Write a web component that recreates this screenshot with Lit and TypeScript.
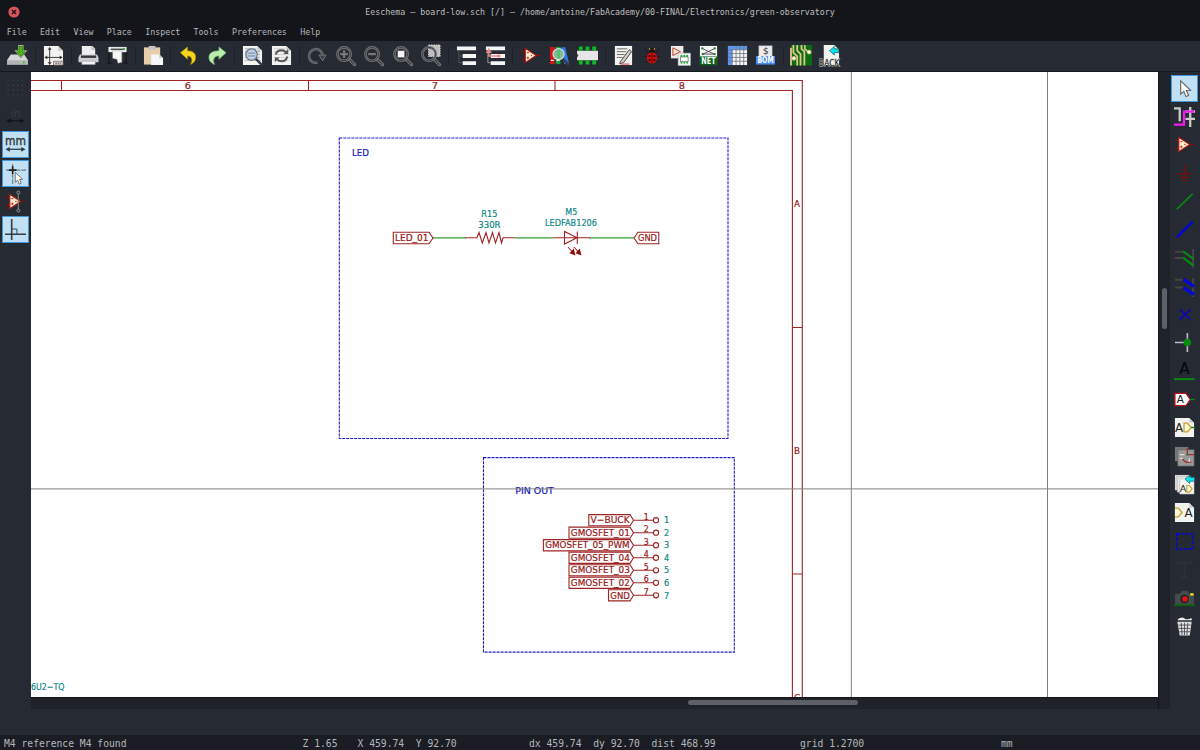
import { LitElement, html, svg, css } from "lit";
import { customElement } from "lit/decorators.js";

const sheet = svg`<path d="M1 1H16L21 6V21H1Z" fill="#f2f2f0"/><path d="M16 1V6H21Z" fill="#c9c9c9"/>`;
const opamp = svg`<path d="M1.500 7H6M1.500 15H6M17 11H21.500" stroke="#8c0a0a" stroke-width="1.300"/><path d="M5.500 3.500V18.500L17 11Z" fill="#fbeccb" stroke="#a51212" stroke-width="1.200"/><path d="M7 8H9.500M7 13.500H9.500M8.200 12.200V14.800" stroke="#b01818" stroke-width=".9"/><circle cx="12" cy="11" r=".8" fill="#b04030"/>`;
const lens = svg`<path d="M14.500 14.500L20.500 20.500" stroke="#757575" stroke-width="3.400" stroke-linecap="round"/><path d="M14.500 14.500L20.500 20.500" stroke="#33373c" stroke-width="1.200"/><circle cx="9.500" cy="9.500" r="7" fill="none" stroke="#777" stroke-width="2.700"/><circle cx="9.500" cy="9.500" r="7" fill="none" stroke="#3d4045" stroke-width="1"/>`;
const cursor = svg`<path d="M7 3V17L10.300 14L12.500 19.500L15.300 18.300L13 13L17.300 12.800Z" fill="#fff" stroke="#666" stroke-width="1.200"/>`;
const chip = svg`<path d="M0 6H22V16H0Z" fill="#e6e6e6"/><path d="M2 1.500H6V6H2ZM9 1.500H13V6H9ZM16 1.500H20V6H16ZM2 16H6V20.500H2ZM9 16H13V20.500H9ZM16 16H20V20.500H16Z" fill="#10b828"/><path d="M0 9Q3 11 0 13Z" fill="#555"/>`;

const icons: Record<string, unknown> = {
  save: svg`<path d="M4 10H18L22 16V20.500H0V16Z" fill="#d6d6d6"/><path d="M0 16H22V20.500H0Z" fill="#b4b4b4"/><circle cx="17.500" cy="18.300" r="1" fill="#18c818"/><path d="M11.500 0H17.500V5.500H21.500L14.500 13.500L7.500 5.500H11.500Z" fill="#dceccf" stroke="#2c4a1c" stroke-width=".6"/><path d="M12.500 1.500H16.500V7H19L14.500 12L10 7H12.500Z" fill="#4bb80b" stroke="#1f5b05" stroke-width=".7"/>`,
  page: svg`${sheet}<path d="M7 3V20M2 13H20" stroke="#333" stroke-width="1"/><path d="M7 2L5 5H9ZM7 21L5 18H9ZM1.500 13L4.500 11V15ZM20.500 13L17.500 11V15Z" fill="#333"/><path d="M11 17H21V21H11Z" fill="#ddd" stroke="#806060" stroke-width=".8"/><path d="M13 19H19" stroke="#555" stroke-width="1.400" stroke-dasharray="1.500 1"/>`,
  print: svg`<path d="M4 1H15L18 4V11H4Z" fill="#eee"/><path d="M14 1V5H18Z" fill="#bbb"/><path d="M2 10H20L21.500 13V18H.5V13Z" fill="#cfcfcf"/><path d="M3 11H19V13.500H3Z" fill="#34373c"/><path d="M4 17H18V20.500H4Z" fill="#f4f4f4" stroke="#999" stroke-width=".6"/>`,
  plot: svg`<path d="M2 7V18M20 7V18M0 19H5M17 19H22" stroke="#15171b" stroke-width="1.500"/><path d="M1.500 2H20.500V7.500H1.500Z" fill="#e8e8e8"/><path d="M4 4.500H18" stroke="#4a4d50" stroke-width="1.500"/><circle cx="18" cy="4" r="1" fill="#18c818"/><path d="M6 6H15.500V18L11.500 19L10.500 15L6 14Z" fill="#f5f5f5" stroke="#aaa" stroke-width=".5"/>`,
  paste: svg`<path d="M1 2.500H18V20.500H1Z" fill="#e6cfa9"/><path d="M6 1H13V5.500H6Z" fill="#c4c8c8"/><path d="M8.500 10H17L21 13.500V21H8.500Z" fill="#f5f6f7"/><path d="M17 10V13.500H21" fill="#c8c8c8"/>`,
  undo: svg`<path d="M2.500 8L10 2V6Q18.500 6 18.500 13Q18.500 18 13 20.500Q15.500 16 14 13.500Q13 11.500 10 11.500V15Z" fill="#f4d51c" stroke="#a88c08" stroke-width=".7"/>`,
  redo: svg`<path d="M20 8L12.500 2V6Q2 6 2 13Q2 18 8 20.500Q5.500 16 8 13Q9.500 11.500 12.500 11.500V15Z" fill="#b8efad" stroke="#6fb269" stroke-width=".7"/>`,
  find: svg`${sheet}<path d="M3 4H15M3 7H19M3 10H19M3 13H19M3 16H19" stroke="#aaa"/><path d="M14 14L20 20" stroke="#333c50" stroke-width="2.600" stroke-linecap="round"/><circle cx="10" cy="10" r="6" fill="#bfcee2" stroke="#66748c" stroke-width="1.300"/><path d="M6 8.500H14M6 11.500H14" stroke="#7286a6"/>`,
  replace: svg`${sheet}<path d="M3 4H15M3 7H19M3 10H19M3 13H19M3 16H19" stroke="#ccc"/><path d="M5 10Q6 5.500 11 5.500Q14 5.500 15.500 7.500M17 12Q16 17 11 17Q8 17 6.500 15" fill="none" stroke="#555" stroke-width="2"/><path d="M13 9.500H18V4.500ZM9 13H4V18Z" fill="#555"/>`,
  refresh: svg`<path d="M12 18.500A7.200 7.200 0 1 1 17.500 11" fill="none" stroke="#777" stroke-width="2.600"/><path d="M12 18.500A7.200 7.200 0 1 1 17.500 11" fill="none" stroke="#3c4046" stroke-width=".8"/><path d="M13.500 10.500H21L17.500 16.500Z" fill="#3c4046" stroke="#777"/>`,
  zoomin: svg`${lens}<path d="M5.500 9.500H13.500M9.500 5.500V13.500" stroke="#777" stroke-width="2.400"/>`,
  zoomout: svg`${lens}<path d="M5.500 9.500H13.500" stroke="#777" stroke-width="2.400"/>`,
  zoomfit: svg`${lens}<path d="M6 6H13V13H6Z" fill="#f4f4f4"/>`,
  zoomsel: svg`<path d="M9 0H21V12H9Z" fill="#bfbfbf" stroke="#e2e2e2" stroke-dasharray="1.500 1"/>${lens}`,
  tree: svg`<path d="M3 6V18.500H7M3 11.500H7" fill="none" stroke="#555"/><path d="M1 1.500H21V5.500H1ZM7 9.500H21V13.500H7ZM7 17H21V21H7Z" fill="#f5f5f5"/>`,
  leave: svg`<path d="M3 6V18.500H7" fill="none" stroke="#999"/><path d="M1 1.500H21V5.500H1ZM6 9.500H21V13.500H6ZM6 17H21V21H6Z" fill="#f5f5f5"/><path d="M4 7V11.500H14" fill="none" stroke="#ea8b8b" stroke-width="1.500"/><path d="M4 3L.8 8.500H7.200Z" fill="#ea8b8b"/><circle cx="14.500" cy="11.500" r="1.800" fill="#ea8b8b"/>`,
  opamp,
  library: svg`<path d="M1 2H6V20H1Z" fill="#d41414"/><path d="M7 2H12V20H7Z" fill="#17a03b"/><path d="M2 16H5M8 16H11" stroke="#fff" stroke-width="1.300"/><path d="M12 3L17 2L21 19L16 20Z" fill="#2d7be0"/><path d="M14 14L20 20" stroke="#333f55" stroke-width="2.800" stroke-linecap="round"/><circle cx="10" cy="9.500" r="5.800" fill="#86b99a" stroke="#d5dada" stroke-width="1.300"/><path d="M10 5V14" stroke="#4fc36f" stroke-width="3"/>`,
  chip,
  annotate: svg`<path d="M2 1H20V21H2Z" fill="#f2f2f0"/><path d="M4 4H15M4 7H14M4 10H12M4 13H10" stroke="#666"/><path d="M8 17L17 5L19.500 7L11 18.500L7 19.500Z" fill="#ccc" stroke="#444"/><path d="M8 20H17" stroke="#dc3535"/>`,
  bug: svg`<path d="M4 4L8 9M19 4L15 9M3 12H20M5 19L8 15M19 19L15 15" stroke="#15161a" stroke-width="1"/><circle cx="11.500" cy="6.500" r="3" fill="#161414"/><path d="M9.500 5L8.500 3.500M13.500 5L14.500 3.500" stroke="#c8a020" stroke-width="1.300"/><ellipse cx="11.500" cy="13.500" rx="5.500" ry="6" fill="#c90e0e"/><path d="M11.500 8V19.500" stroke="#500"/><circle cx="9" cy="11.500" r="1.100" fill="#300"/><circle cx="14" cy="11.500" r="1.100" fill="#300"/><circle cx="9" cy="15.700" r="1.100" fill="#300"/><circle cx="14" cy="15.700" r="1.100" fill="#300"/>`,
  assign: svg`<path d="M1 1H14V14H1Z" fill="#ececec"/><path d="M3 3V11L11 7Z" fill="#f6e3d2" stroke="#bb3a2a"/><path d="M8.500 8.500H21.500V21.500H8.500Z" fill="#f2f2f2" stroke="#aaa" stroke-width=".6"/><path d="M11 12.500H19V17.500H11Z" fill="#fff" stroke="#555" stroke-width=".7"/><path d="M12 10.500V12.500M15 10.500V12.500M18 10.500V12.500M12 17.500V19.500M15 17.500V19.500M18 17.500V19.500" stroke="#18a82c" stroke-width="1.800"/>`,
  net: svg`<path d="M2 1H20V21H2Z" fill="#f3f3f3"/><path d="M4 3.500L17 9.500H5L18 3.500" fill="none" stroke="#555"/><circle cx="4.500" cy="3.500" r="1.200" fill="#1b7b2b"/><circle cx="17.500" cy="3.500" r="1.200" fill="#1b7b2b"/><circle cx="5" cy="9.500" r="1.200" fill="#1b7b2b"/><circle cx="17.500" cy="9.500" r="1.200" fill="#1b7b2b"/><path d="M2 12H20V21H2Z" fill="#046317"/><text x="3.500" y="19.700" font-size="9" font-weight="700" textLength="15" lengthAdjust="spacingAndGlyphs" fill="#fff">NET</text>`,
  table: svg`<path d="M1 1H21V21H1Z" fill="#f7f7f7"/><path d="M1 1H21V5H5.500V21H1Z" fill="#5b97f0"/><path d="M5.500 5V21M9.500 1V21M13.500 1V21M17.500 1V21M1 5H21M1 9H21M1 13H21M1 17H21" stroke="#6f7682" stroke-width=".9"/>`,
  bom: svg`<path d="M4 .8H18V13H4Z" fill="#ececec" stroke="#aaa" stroke-width=".5"/><text x="8" y="9.500" font-size="10" fill="#333">$</text><path d="M1 11.500H21V20.500H1Z" fill="#4b8df0"/><text x="2.500" y="19.300" font-size="9" font-weight="700" textLength="17" lengthAdjust="spacingAndGlyphs" fill="#fff">BOM</text>`,
  pcb: svg`<path d="M0 0H22V21.500H0Z" fill="#0d6b10"/><path d="M2.500 0V8L6.500 12V21.500M6.500 0V6L10 9.500V21.500M11 0V4L14 7V21.500M0 3V21.500" fill="none" stroke="#dfc78c" stroke-width="1.900"/><path d="M14.500 0V4L18 7.500" fill="none" stroke="#dfc78c" stroke-width="1.600"/><circle cx="19" cy="7.500" r="1.900" fill="#fff" stroke="#dfc78c"/><circle cx="3" cy="14" r="1.900" fill="#fff" stroke="#dfc78c"/>`,
  back: svg`<path d="M5 0H16L21 5V21H5Z" fill="#f2f2f0"/><path d="M11 6L16 1.500V4H20.500V8H16V10.500Z" fill="#0de3ee" stroke="#17656c" stroke-width=".8"/><text x="0" y="21.500" font-size="9.500" textLength="21.500" lengthAdjust="spacingAndGlyphs" fill="#1c1c1c" stroke="#ccc" stroke-width="1" paint-order="stroke">BACK</text>`,
  grid: svg`<path d="M2.500 2.500H20M2.500 7.500H20M2.500 12.500H20M2.500 17.500H20" stroke="#3b3e43" stroke-width="1.500" stroke-dasharray="1.500 3.500"/>`,
  inch: svg`<text x="6" y="11" font-size="11.500" fill="#393b3e">in</text><path d="M3 15.500H19" stroke="#111" stroke-width="1.200"/><path d="M1.500 15.500L6 13V18ZM20.500 15.500L16 13V18Z" fill="#111"/>`,
  mm: svg`<text x="0" y="11.500" font-size="12" textLength="22" lengthAdjust="spacingAndGlyphs" fill="#333a3e" stroke="#333a3e" stroke-width=".4">mm</text><path d="M3 16H19" stroke="#2b3a44" stroke-width="1.300"/><path d="M.5 16L5 13.500V18.500ZM21.500 16L17 13.500V18.500Z" fill="#2b3a44"/>`,
  cross: svg`<path d="M1 7.500H22M8 1V22" stroke="#6b7b85" stroke-width="1.200" stroke-dasharray="7 1"/><path d="M4 7.500H12M8 3.500V11.500" stroke="#222" stroke-width="1.700"/><g transform="translate(5.500 7.500) scale(.75)">${cursor}</g>`,
  hidden: svg`<g transform="translate(-.5 0)">${opamp}</g><path d="M14 2V20" stroke="#777" stroke-width="1.300"/><circle cx="14" cy="1.500" r="1.500" fill="#262a33" stroke="#999"/><circle cx="14" cy="20.500" r="1.500" fill="#262a33" stroke="#999"/>`,
  ortho: svg`<path d="M7 0V22M0 16H22" stroke="#333f47" stroke-width="1.700"/><path d="M7 10.500H12.500V16" fill="none" stroke="#333f47"/>`,
  cursor,
  highlight: svg`<path d="M0 2.500H6V16M12 13.500H22M17 1V22M12 6H22" fill="none" stroke="#ccc" stroke-width="2.400"/><path d="M0 19.500H10.500V6H21" fill="none" stroke="#f21af2" stroke-width="2.400"/>`,
  symbol: svg`<g transform="translate(-.5 0)">${opamp}</g>`,
  power: svg`<path d="M11 2V11.500M3.500 11.500H18.500M6.500 15H15.500M9 18.500H13" stroke="#8a0808" stroke-width="1.300"/>`,
  wire: svg`<path d="M3 19L19.500 3" stroke="#078c10" stroke-width="1.700"/>`,
  bus: svg`<path d="M3 19L19.500 3" stroke="#0505d8" stroke-width="2.700"/>`,
  wireentry: svg`<path d="M1 4H9M1 10.500H9M20 1V21" stroke="#444" stroke-width="2"/><path d="M9.500 3.500L20.500 11.500M9.500 10L20.500 18.500" stroke="#078c10" stroke-width="2.200"/>`,
  busentry: svg`<path d="M1 4H9M1 12H9M20 2V22" stroke="#444" stroke-width="2"/><path d="M10 3.500L21 11M10 12L21 19.500" stroke="#0505e2" stroke-width="3.200"/>`,
  noconn: svg`<path d="M6 5.500L17 16.500M17 5.500L6 16.500" stroke="#0505cc" stroke-width="1.600"/>`,
  junction: svg`<path d="M1 11H14M14 1V21" stroke="#b9bcc0" stroke-width="1.700"/><circle cx="14" cy="11" r="4" fill="#078c10"/>`,
  label: svg`<text x="5.500" y="14" font-size="16" fill="#050505" textLength="11" lengthAdjust="spacingAndGlyphs">A</text><path d="M0 19H21.500" stroke="#078c10" stroke-width="2"/>`,
  global: svg`<path d="M1 4.500H12.500L17 11L12.500 17.500H1Z" fill="#fff" stroke="#b81414" stroke-width="1.300"/><text x="3" y="15" font-size="11" fill="#111">A</text><path d="M17 11H21.500" stroke="#078c10" stroke-width="1.500"/>`,
  hier: svg`${sheet}<text x="1" y="15.500" font-size="12" textLength="8.500" lengthAdjust="spacingAndGlyphs" fill="#222">A</text><path d="M10.500 6.500H14L18 11L14 15.500H10.500Z" fill="#fff8df" stroke="#c8a42a" stroke-width="1.400"/><path d="M18 11H22" stroke="#078c10" stroke-width="1.500"/>`,
  subsheet: svg`<path d="M1 1H15V16H1Z" fill="#777"/><path d="M4 4H21V21H4Z" fill="#999" stroke="#666" stroke-width=".7"/><path d="M14 2V9H21M9 14L13 17H18" fill="none" stroke="#a23030" stroke-width="1.400"/><path d="M6 9H11M16 13V17M6 13H9" stroke="#ddd" stroke-width="1.300"/><circle cx="14" cy="9" r="1.300" fill="#367a36"/>`,
  importpin: svg`<path d="M1 1H16V17H1Z" fill="#d8d8d5"/><path d="M3.500 3H18V19H3.500Z" fill="#eee" stroke="#aaa" stroke-width=".6"/><path d="M6 5H21V21H6Z" fill="#f6f6f4" stroke="#aaa" stroke-width=".6"/><path d="M11.500 5.500L16.500 1V3.500H21.500V7.500H16.500V10Z" fill="#0de3ee" stroke="#17656c" stroke-width=".8"/><text x="6" y="19" font-size="10" textLength="7" lengthAdjust="spacingAndGlyphs" fill="#222">A</text><path d="M13.500 12H16L19 15.500L16 19H13.500Z" fill="#fff8df" stroke="#c8a42a" stroke-width="1.200"/>`,
  sheetpin: svg`${sheet}<path d="M1 6.500H4.500L8.500 11L4.500 15.500H1" fill="#fff8df" stroke="#c8a42a" stroke-width="1.400"/><text x="11" y="15.500" font-size="12" textLength="8.500" lengthAdjust="spacingAndGlyphs" fill="#222">A</text>`,
  dashed: svg`<path d="M3 3H19.500V19H3Z" fill="none" stroke="#0505dc" stroke-width="1.700" stroke-dasharray="3 1.800"/>`,
  text: svg`<path d="M4 6V3.500H18V6M11 4V19M8 19H14" fill="none" stroke="#2f3134" stroke-width="2"/>`,
  camera: svg`<path d="M1 7H6L8 4H14L16 7H21V19H1Z" fill="#444a4b"/><path d="M0 19H22" stroke="#08660d" stroke-width="2"/><circle cx="11" cy="12.500" r="5.500" fill="#27292b" stroke="#666" stroke-width=".7"/><circle cx="11.500" cy="12.500" r="2.700" fill="#f01010"/><path d="M17 6.500H20.500V9H17Z" fill="#ece020"/>`,
  trash: svg`<path d="M4 3.500Q8 .5 11 2.500T18 2L19 4.500H4Z" fill="#eee"/><path d="M3.500 6H18.500L16.500 20.500H6Z" fill="#e0e0e0"/><path d="M7.500 7L8.500 20M11 7V20M14.500 7L13.500 20M4.500 9.500H17.500M5 13H17M5.500 16.500H17" stroke="#35383c" stroke-width=".8"/>`,
};

const icon = (name: string) => html`<svg class="icon" viewBox="0 0 22 22" fill="none">${icons[name]}</svg>`;

const topTools = ["save", "|", "page", "|", "print", "plot", "|", "paste", "|", "undo", "redo", "|", "find", "replace", "|",
  "refresh", "zoomin", "zoomout", "zoomfit", "zoomsel", "|", "tree", "leave", "|", "opamp", "library", "chip", "|",
  "annotate", "bug", "assign", "net", "table", "bom", "|", "pcb", "back"];
const leftTools = ["grid", "inch", "mm", "cross", "hidden", "ortho"];
const rightTools = ["cursor", "highlight", "symbol", "power", "wire", "bus", "wireentry", "busentry", "noconn", "junction",
  "label", "global", "hier", "subsheet", "importpin", "sheetpin", "dashed", "text", "camera", "trash"];
const activeTools = new Set(["mm", "cross", "ortho", "cursor"]);

const note = (x: number, y: number, width: number, value: string, cls: string) =>
  svg`<text class=${cls} x=${x} y=${y} textLength=${width} lengthAdjust="spacingAndGlyphs">${value}</text>`;

const pins: [string, number, number][] = [
  ["V-BUCK", 588.8, 39], ["GMOSFET_01", 569, 59], ["GMOSFET_05_PWM", 543.4, 84.5], ["GMOSFET_04", 569, 59],
  ["GMOSFET_03", 569, 59], ["GMOSFET_02", 569, 59], ["GND", 608.5, 19.5],
];

@customElement("schematic-canvas")
class SchematicCanvas extends LitElement {
  static styles = css`
    :host { display: block; overflow: hidden; background: #fff; }
    svg { display: block; width: 1127px; height: 625px; }
    text { font-family: "DejaVu Sans", sans-serif; font-size: 9.4px; stroke-width: .2px; }
    .red { fill: #951616; stroke: #951616; }
    .teal { fill: #0b8787; stroke: #0b8787; }
    .blue { fill: #1414bd; stroke: #1414bd; }
    .num { font-size: 8.8px; }
    .line { stroke: #a02424; fill: none; stroke-width: 1.1; }
    .wire { stroke: #36a036; stroke-width: 1.2; }
    .zone { stroke: #1c1cc4; fill: none; stroke-width: 1.1; stroke-dasharray: 3 1; }
    .guide { stroke: #808080; stroke-width: 1; }
    .solid { fill: #8c0c0c; }
  `;
  render() {
    return html`<svg viewBox="31 72 1127 625">
      <path class="line" d="M31 80.500H802.300V697M31 90.500H792.400V697M61.500 80.500V90.500M308.500 80.500V90.500M555 80.500V90.500M792.400 327.500H802.300M792.400 574H802.300"/>
      ${note(184.8, 89, 6.2, "6", "red")}${note(431.8, 89, 6.2, "7", "red")}${note(678.8, 89, 6.2, "8", "red")}
      ${note(794, 207.300, 6, "A", "red")}${note(794, 454.300, 6, "B", "red")}${note(794, 701.300, 6, "C", "red")}
      <rect class="zone" x="339.300" y="138" width="388.700" height="300.500"/>
      <rect class="zone" x="483.500" y="457.600" width="250.800" height="194.500"/>
      ${note(352, 155.500, 17, "LED", "blue")}${note(515.300, 494, 38.500, "PIN OUT", "blue")}
      <path class="guide" d="M31 488.900H1158M851.300 72V697M1047.500 72V697"/>

      <path class="wire" d="M433 237.800H466M515 237.800H553M589 237.800H634"/>
      <path class="line" d="M393.300 232.200H429L433 238L429 243.800H393.300ZM658.800 232.200H638L634 238L638 243.800H658.800Z"/>
      <path class="line" d="M465 237.800H477L479 232.500L482.300 243L486 232.500L489 243L492.500 232.500L495.500 243L499 232.500L501.500 243L503 237.800H515M553 237.800H590M564.500 231.500V244L577 237.800ZM577.300 231.500V244"/>
      <path class="line" d="M568 247L572 251.500M574 247L578 251.500"/>
      <path class="solid" d="M575.500 255.500L569.500 253.200L573.700 248.500ZM581.500 255.500L575.500 253.200L579.700 248.500Z"/>
      ${note(395, 241.200, 33.500, "LED_01", "red")}${note(638, 241.200, 19, "GND", "red")}
      ${note(481.300, 217.300, 16.200, "R15", "teal")}${note(478.300, 227.900, 22.200, "330R", "teal")}
      ${note(565.300, 215.300, 12, "M5", "teal")}${note(545, 226.200, 52, "LEDFAB1206", "teal")}

      ${pins.map(([name, x, width], i) => {
        const y = 520.2 + i * 12.52;
        return svg`<path class="line" d="M${x} ${y - 5.6}H630L633.500 ${y}L630 ${y + 5.6}H${x}ZM633.500 ${y}H653.400"/>
          <circle class="line" cx="656" cy=${y} r="2.600"/>
          ${note(x + 1.8, y + 3.2, width, name.replace("-", "−"), "red")}
          ${note(643.8, y - 0.6, 5, String(i + 1), "red num")}
          ${note(664, y + 3.2, 5.2, String(i + 1), "teal num")}`;
      })}
      ${note(31, 689.800, 33.500, "6U2−TQ", "teal")}
    </svg>`;
  }
}

@customElement("app-root")
class AppRoot extends LitElement {
  static styles = css`
    :host { display: flex; flex-direction: column; width: 1200px; height: 750px; overflow: hidden; background: #262a33; color: #b5b8bb; font: 8.3px/1 "DejaVu Sans Mono", monospace; white-space: pre; }
    .title { height: 23px; flex: none; display: grid; grid-template-columns: 28px 1fr 28px; align-items: center; background: #14151a; text-align: center; }
    .title span { color: #bcbebe; padding-top: 1px; }
    .close { width: 12px; height: 12px; margin-left: 8px; }
    .menu { height: 18px; flex: none; display: flex; gap: 13.4px; align-items: center; padding-left: 6.7px; background: #14151a; }
    .tools { box-sizing: border-box; height: 31px; flex: none; display: flex; align-items: center; padding: 0 0 1px 3.4px; border-bottom: 1px solid #16181d; }
    .tool { width: 28.500px; height: 28.320px; flex: none; display: grid; place-items: center; }
    .sep { width: 1px; height: 18px; margin: 0 3.070px; background: #1e2128; flex: none; }
    .icon { width: 21px; height: 21px; display: block; font-family: "DejaVu Sans", sans-serif; overflow: visible; }
    .active .icon { padding: 2px; background: #c2e0f4; border: 1px solid #3f96dc; }
    .main { height: 637px; flex: none; display: grid; grid-template-columns: 31px 1127px 12px 30px; }
    .side { display: flex; flex-direction: column; align-items: center; padding-top: 2px; }
    .left { padding-right: 1px; }
    .right { padding-right: 1px; }
    .center { display: grid; grid-template-rows: 625px 12px; }
    .hscroll { background: #1f2229; border-top: 1px solid #111318; box-sizing: border-box; }
    .hthumb { width: 170px; height: 5px; margin: 2px 0 0 657px; border-radius: 3px; background: #5d6067; }
    .vscroll { background: #1f2229; border-left: 1px solid #111318; box-sizing: border-box; }
    .vthumb { width: 5px; height: 41px; margin: 216px 0 0 3px; border-radius: 3px; background: #5d6067; }
    .info { flex: 1; }
    .status { height: 15px; flex: none; display: grid; grid-template-columns: 298.500px 55px 171.500px 271px 201px 1fr; padding: 3px 0 0 4px; align-items: center; background: #1a1d24; font-size: 9.700px; color: #b4b7b9; box-sizing: border-box; }
  `;
  private tool(name: string) {
    return html`<div class="tool ${activeTools.has(name) ? "active" : ""}">${icon(name)}</div>`;
  }
  render() {
    return html`
      <div class="title"><svg class="close" viewBox="0 0 12 12"><circle cx="6" cy="6" r="5.600" fill="#d9555d"/><path d="M4 4L8 8M8 4L4 8" stroke="#22151a" stroke-width="1.500"/></svg><span>Eeschema — board-low.sch [/] — /home/antoine/FabAcademy/00-FINAL/Electronics/green-observatory</span></div>
      <div class="menu">${["File", "Edit", "View", "Place", "Inspect", "Tools", "Preferences", "Help"].map((m) => html`<span>${m}</span>`)}</div>
      <div class="tools">${topTools.map((n) => (n === "|" ? html`<div class="sep"></div>` : this.tool(n)))}</div>
      <div class="main">
        <div class="side left">${leftTools.map((n) => this.tool(n))}</div>
        <div class="center"><schematic-canvas></schematic-canvas><div class="hscroll"><div class="hthumb"></div></div></div>
        <div class="vscroll"><div class="vthumb"></div></div>
        <div class="side right">${rightTools.map((n) => this.tool(n))}</div>
      </div>
      <div class="info"></div>
      <div class="status"><span>M4 reference M4 found</span><span>Z 1.65</span><span>X 459.74  Y 92.70</span><span>dx 459.74  dy 92.70  dist 468.99</span><span>grid 1.2700</span><span>mm</span></div>`;
  }
}
